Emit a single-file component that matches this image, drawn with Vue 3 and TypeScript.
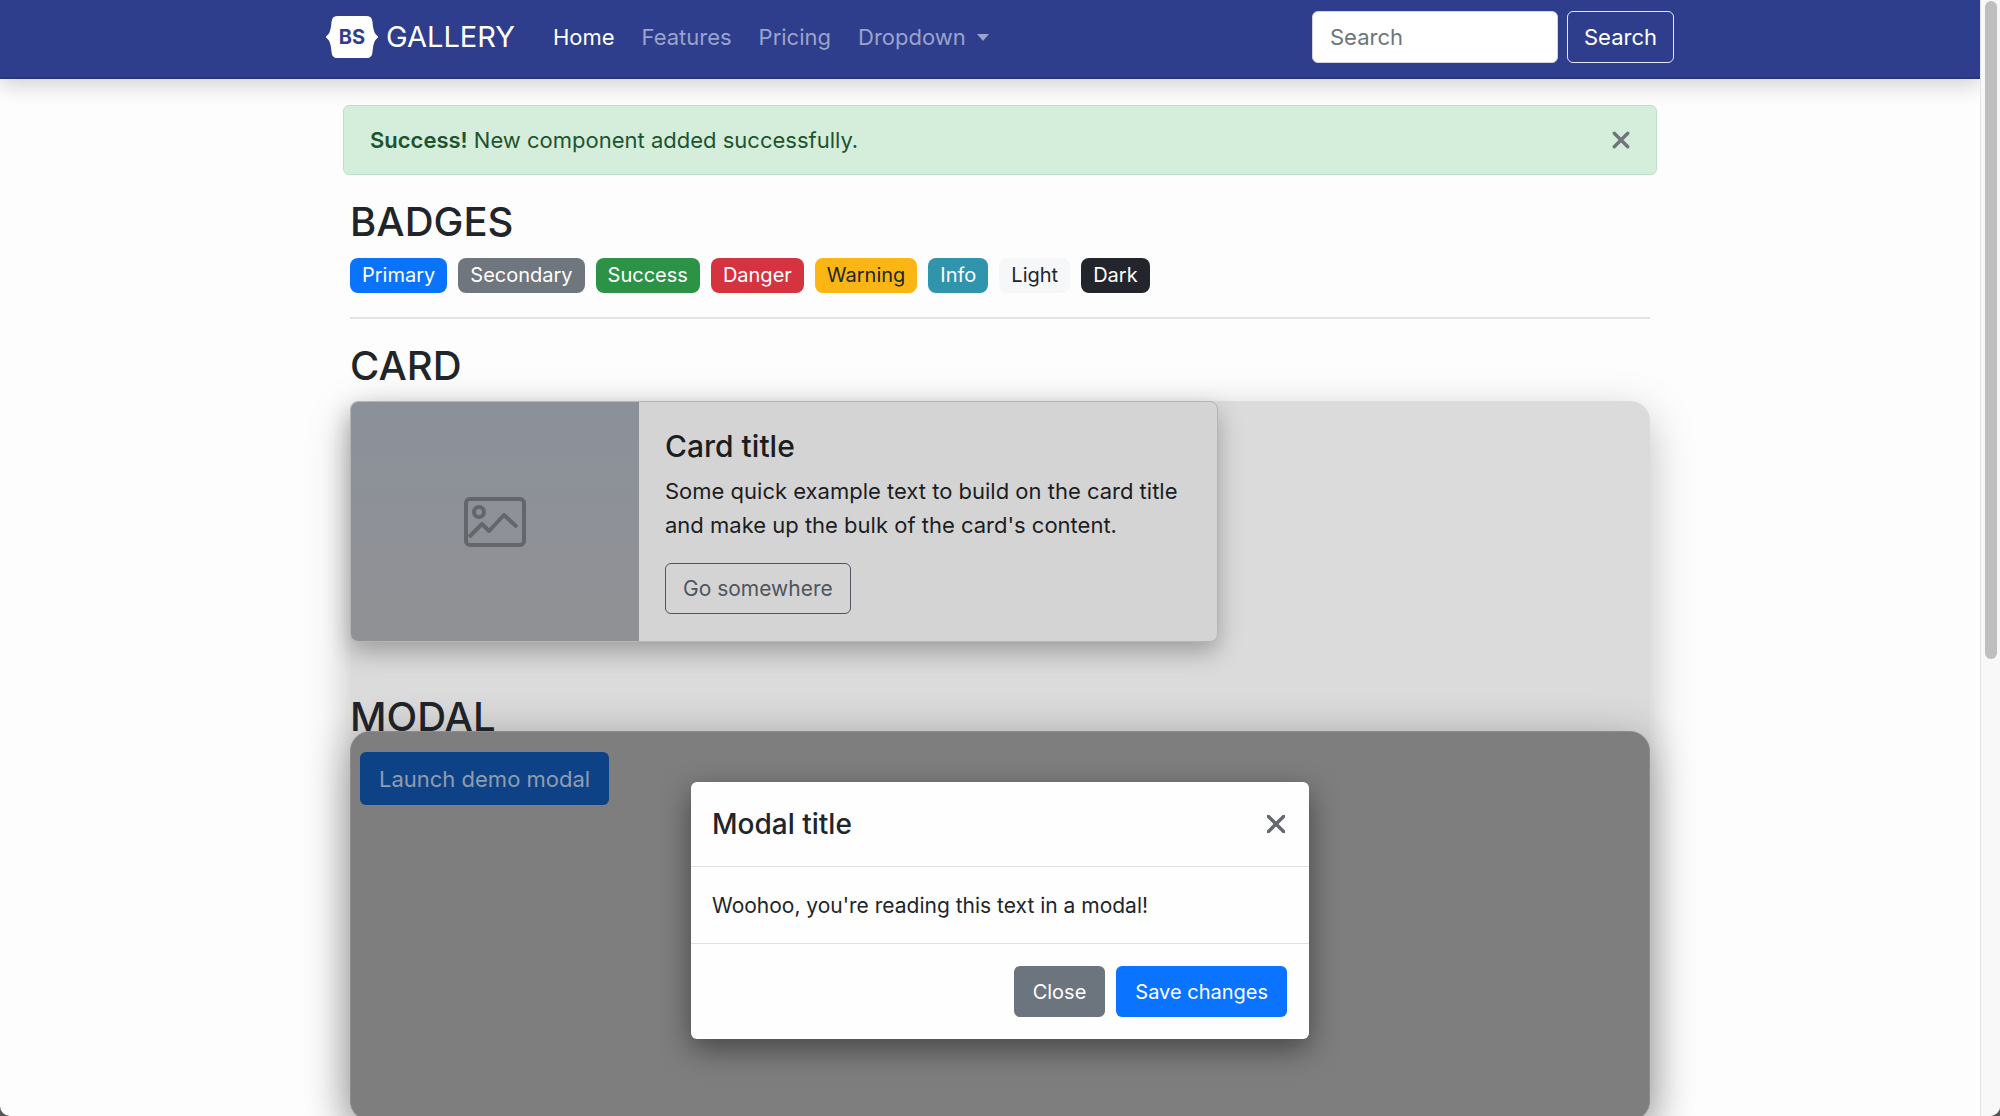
<script setup lang="ts">
import { ref } from 'vue'

interface NavLink {
  label: string
  active?: boolean
}

interface Badge {
  label: string
  tone: string
}

const links: NavLink[] = [
  { label: 'Home', active: true },
  { label: 'Features' },
  { label: 'Pricing' },
]

const badges: Badge[] = [
  { label: 'Primary', tone: 'primary' },
  { label: 'Secondary', tone: 'secondary' },
  { label: 'Success', tone: 'success' },
  { label: 'Danger', tone: 'danger' },
  { label: 'Warning', tone: 'warning' },
  { label: 'Info', tone: 'info' },
  { label: 'Light', tone: 'light' },
  { label: 'Dark', tone: 'dark' },
]

const query = ref('')
const alertOpen = ref(true)
const modalOpen = ref(true)
</script>

<template>
  <div class="page">
    <header class="navbar">
      <nav class="navbar-inner" aria-label="Main">
        <a class="brand" href="#">
          <svg class="logo" viewBox="0 0 52 42" aria-hidden="true">
            <path
              d="M11 0H41Q46 0 46.500 6C47 13 48.500 18 51 19.500Q53 21 51 22.500C48.500 24 47 29 46.500 36Q46 42 41 42H11Q6 42 5.500 36C5 29 3.500 24 1 22.500Q-1 21 1 19.500C3.500 18 5 13 5.500 6Q6 0 11 0Z"
              fill="#fff"
            />
            <text x="26" y="28" text-anchor="middle" class="logo-text">BS</text>
          </svg>
          <span>GALLERY</span>
        </a>
        <ul class="nav-links">
          <li v-for="link in links" :key="link.label">
            <a href="#" class="nav-link" :class="{ active: link.active }">{{ link.label }}</a>
          </li>
          <li>
            <button type="button" class="nav-link dropdown" aria-haspopup="true">
              Dropdown<span class="caret"></span>
            </button>
          </li>
        </ul>
        <form class="search" @submit.prevent>
          <input v-model="query" class="search-input" type="search" placeholder="Search" aria-label="Search" />
          <button class="btn btn-outline-light" type="submit">Search</button>
        </form>
      </nav>
    </header>

    <main class="content">
      <div v-if="alertOpen" class="alert" role="alert">
        <p><strong>Success!</strong> New component added successfully.</p>
        <button type="button" class="close" aria-label="Dismiss" @click="alertOpen = false">
          <svg viewBox="0 0 16 16" aria-hidden="true">
            <path d="M2 2L14 14M14 2L2 14" />
          </svg>
        </button>
      </div>

      <section>
        <h2>BADGES</h2>
        <div class="badges">
          <span v-for="badge in badges" :key="badge.label" class="badge" :class="badge.tone">{{ badge.label }}</span>
        </div>
      </section>

      <hr />

      <section>
        <h2>CARD</h2>
      </section>

      <div class="stage">
        <article class="card">
          <div class="card-image">
            <svg class="picture" viewBox="0 0 62 50" aria-hidden="true">
              <rect x="2" y="2" width="58" height="46" rx="4" />
              <circle cx="15" cy="15" r="5" />
              <path d="M5 40L18 27L25 34L40 18L53 30" />
            </svg>
          </div>
          <div class="card-body">
            <h3>Card title</h3>
            <p>Some quick example text to build on the card title and make up the bulk of the card's content.</p>
            <a class="btn btn-outline-dark" href="#">Go somewhere</a>
          </div>
        </article>

        <h2 class="modal-heading">MODAL</h2>

        <div class="modal-area">
          <button type="button" class="btn launch" @click="modalOpen = true">Launch demo modal</button>
          <div v-if="modalOpen" class="dialog" role="dialog" aria-labelledby="modal-title">
            <div class="dialog-header">
              <h3 id="modal-title">Modal title</h3>
              <button type="button" class="close" aria-label="Close dialog" @click="modalOpen = false">
                <svg viewBox="0 0 16 16" aria-hidden="true">
                  <path d="M1 1L15 15M15 1L1 15" />
                </svg>
              </button>
            </div>
            <p class="dialog-body">Woohoo, you're reading this text in a modal!</p>
            <div class="dialog-footer">
              <button type="button" class="btn btn-secondary" @click="modalOpen = false">Close</button>
              <button type="button" class="btn btn-primary">Save changes</button>
            </div>
          </div>
        </div>
      </div>
    </main>

    <div class="scrollbar" aria-hidden="true"><span class="thumb"></span></div>
  </div>
</template>

<style>
body {
  margin: 0;
  background: #555;
}
</style>

<style scoped>
.page {
  position: relative;
  box-sizing: border-box;
  height: 100vh;
  overflow: hidden;
  border-radius: 0 0 10px 10px;
  background: #fdfdfd;
  color: #212529;
  font-family: Inter, "Liberation Sans", sans-serif;
  font-size: 22px;
  line-height: 34px;
}

.page *,
.page *::before,
.page *::after {
  box-sizing: border-box;
}

h2,
h3,
p,
ul {
  margin: 0;
  padding: 0;
}

h2 {
  font-size: 40px;
  line-height: 48px;
  font-weight: 500;
}

button,
input {
  font: inherit;
}

a {
  text-decoration: none;
}

/* Navigation */
.navbar {
  margin-right: 20px;
  padding: 11px 0 14px 20px;
  background: #2f3e8c;
  border-bottom: 2px solid #2a3776;
  box-shadow: 0 6px 20px rgba(0, 0, 0, 0.18);
}

.navbar-inner {
  display: flex;
  align-items: center;
  width: 1348px;
  max-width: 100%;
  margin: 0 auto;
}

.brand {
  display: flex;
  align-items: center;
  gap: 8px;
  color: #fff;
  font-size: 29px;
}

.logo {
  width: 52px;
  height: 42px;
}

.logo-text {
  fill: #2f3e8c;
  font-size: 20px;
  font-weight: 700;
}

.nav-links {
  display: flex;
  gap: 27px;
  margin-left: 38px;
  list-style: none;
}

.nav-link {
  padding: 0;
  border: 0;
  background: none;
  color: #9aa3cb;
  line-height: 34px;
}

.nav-link.active {
  color: #fff;
}

.dropdown {
  display: flex;
  align-items: center;
  gap: 11px;
}

.caret {
  border: 6px solid transparent;
  border-top: 7px solid #9aa3cb;
  border-bottom: 0;
}

.search {
  display: flex;
  gap: 9px;
  margin-left: auto;
}

.search-input {
  width: 246px;
  height: 52px;
  padding: 0 17px;
  border: 1px solid #ced4da;
  border-radius: 6px;
  background: #fff;
  color: #212529;
  appearance: none;
}

.search-input::placeholder {
  color: #6c757d;
  opacity: 1;
}

/* Buttons */
.btn {
  display: inline-flex;
  align-items: center;
  justify-content: center;
  height: 51px;
  padding: 0 17px;
  border: 1px solid transparent;
  border-radius: 6px;
  white-space: nowrap;
}

.btn-outline-light {
  height: 52px;
  padding: 0 16px;
  border-color: #e4e7f4;
  background: transparent;
  color: #fff;
}

.btn-outline-dark {
  border: 1px solid #50545e;
  color: #50545e;
  font-size: 21px;
}

.btn-secondary {
  background: #6c757d;
  color: #fff;
}

.btn-primary {
  background: #0a73ff;
  color: #fff;
}

.close {
  display: flex;
  padding: 0;
  border: 0;
  background: none;
}

.close svg {
  width: 18px;
  height: 18px;
  fill: none;
  stroke: #65696e;
  stroke-width: 3;
  stroke-linecap: round;
}

.alert .close {
  opacity: 0.9;
}

/* Content */
.content {
  width: 1300px;
  max-width: 90%;
  margin: 0 auto;
}

.alert {
  display: flex;
  align-items: center;
  justify-content: space-between;
  margin: 26px -7px 23px;
  padding: 17px 26px;
  border: 1px solid #bfe0c8;
  border-radius: 6px;
  background: #d5eddb;
  color: #1d5430;
}

.alert strong {
  font-weight: 600;
}

.badges {
  display: flex;
  gap: 11px;
  margin-top: 12px;
}

.badge {
  padding: 0 12px;
  border-radius: 8px;
  color: #fff;
  font-size: 20px;
  line-height: 35px;
}

.primary {
  background: #0a73fb;
}

.secondary {
  background: #6f767e;
}

.success {
  background: #2c9346;
}

.danger {
  background: #d5333f;
}

.warning {
  background: #fbb614;
  color: #212529;
}

.info {
  background: #3094ac;
}

.light {
  background: #f6f7f8;
  color: #212529;
}

.dark {
  background: #22252c;
}

hr {
  height: 2px;
  margin: 24px 0 23px;
  border: 0;
  background: #e3e4e4;
}

.stage {
  margin-top: 11px;
  border-radius: 20px;
  background: #dbdbdb;
  box-shadow: 0 14px 44px rgba(0, 0, 0, 0.25);
}

.card {
  display: flex;
  width: 868px;
  max-width: 100%;
  overflow: hidden;
  border: 1px solid #b4b6b9;
  border-radius: 8px;
  background: #d4d4d4;
  box-shadow: 0 10px 24px rgba(0, 0, 0, 0.28);
}

.card-image {
  display: flex;
  flex: 0 0 288px;
  align-items: center;
  justify-content: center;
  background: linear-gradient(#8b9099, #909194);
}

.picture {
  width: 62px;
  height: 50px;
  fill: none;
  stroke: #63666b;
  stroke-width: 4;
  stroke-linejoin: round;
}

.card-body {
  padding: 26px 26px 27px;
  color: #1c1d1f;
}

.card-body h3 {
  margin-bottom: 10px;
  font-size: 30px;
  font-weight: 500;
  line-height: 36px;
}

.card-body p {
  margin-bottom: 21px;
}

.card-body .btn {
  display: flex;
  width: fit-content;
}

.modal-heading {
  padding-top: 61px;
  line-height: 28px;
}

.modal-area {
  position: relative;
  height: 390px;
  padding: 20px 9px;
  border: 1px solid #8c8c8c;
  border-radius: 20px;
  background: #7e7e7e;
  box-shadow: 0 8px 44px rgba(0, 0, 0, 0.3);
}

.launch {
  height: 53px;
  padding: 0 18px;
  background: #0e4287;
  color: #8f9cb0;
}

.dialog {
  position: absolute;
  top: 50px;
  left: 50%;
  width: 618px;
  border-radius: 6px;
  background: #fefefe;
  box-shadow: 0 10px 30px rgba(0, 0, 0, 0.45);
  transform: translateX(-50%);
}

.dialog-header {
  display: flex;
  align-items: center;
  justify-content: space-between;
  height: 85px;
  padding: 0 24px 0 21px;
  border-bottom: 1px solid #dee2e6;
}

.dialog-header h3 {
  font-size: 28px;
  font-weight: 500;
}

.dialog-body {
  padding: 22px 21px 20px;
  font-size: 21px;
}

.dialog-footer {
  display: flex;
  justify-content: flex-end;
  gap: 11px;
  padding: 22px;
  border-top: 1px solid #dee2e6;
}

.dialog-footer .btn {
  padding: 0 18px;
  font-size: 20px;
}

/* Scroll track */
.scrollbar {
  position: absolute;
  top: 0;
  right: 0;
  bottom: 0;
  display: flex;
  justify-content: center;
  width: 20px;
  padding: 1px 0 0;
  border-left: 1px solid #e3e3e3;
  background: #f8f8f8;
}

.thumb {
  width: 12px;
  height: 59%;
  border-radius: 6px;
  background: #bfbfbf;
}
</style>
